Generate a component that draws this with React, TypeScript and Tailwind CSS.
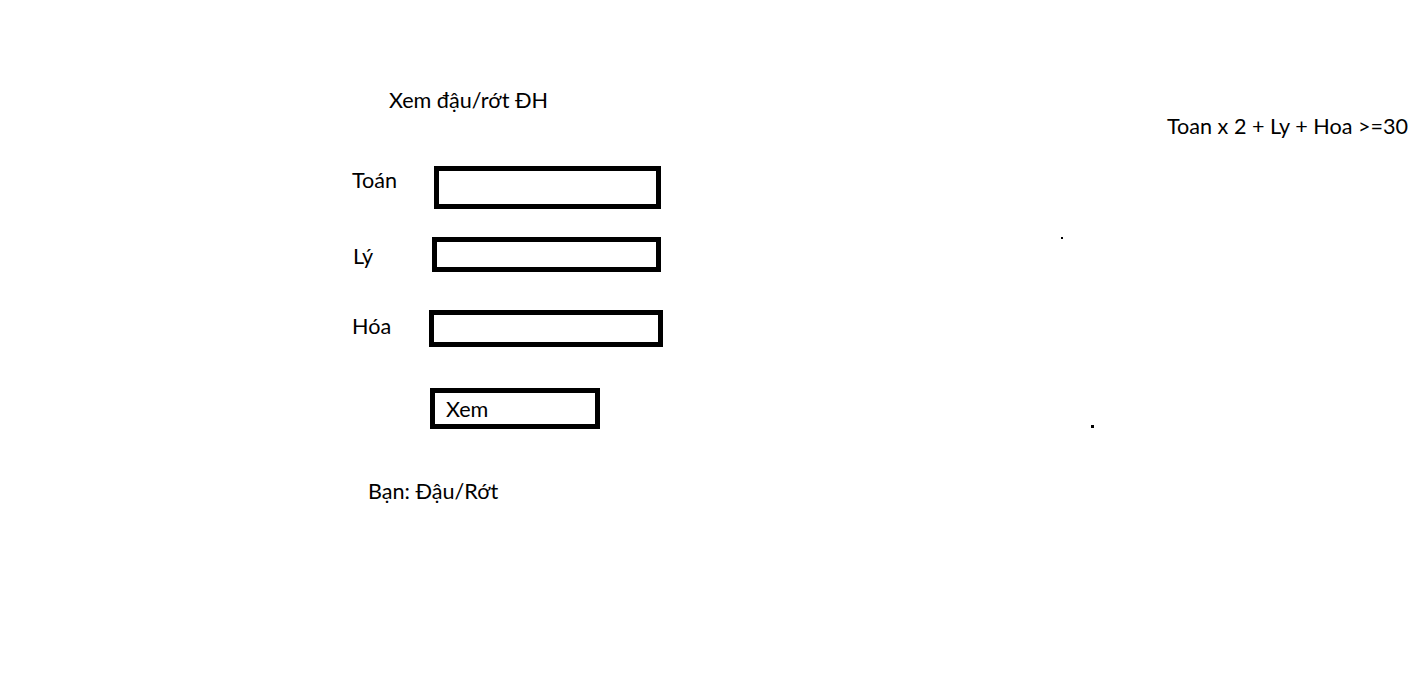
import React from "react";

const App = () => {
  return (
    <div className="relative flex h-[679px] w-full justify-between bg-white font-['Lato',sans-serif] text-[21.6px] text-black">
      <div className="flex flex-col pl-[340px] pt-[88px]">
        <h1 className="ml-[49px] leading-6">Xem đậu/rớt ĐH</h1>

        {/* form rows */}
        <div className="mt-[54px] flex items-start pl-[12px]">
          <span className="mt-[2px] w-[82px] leading-6">Toán</span>
          <div className="h-[43px] w-[227px] border-[5px] border-black" />
        </div>

        <div className="mt-[28px] flex items-start pl-[13px]">
          <span className="mt-[7px] w-[79px] leading-6">Lý</span>
          <div className="h-[35px] w-[229px] border-[5px] border-black" />
        </div>

        <div className="mt-[38px] flex items-start pl-[12px]">
          <span className="mt-[4px] w-[77px] leading-6">Hóa</span>
          <div className="h-[37px] w-[234px] border-[5px] border-black" />
        </div>

        <button className="ml-[90px] mt-[41px] flex h-[41px] w-[170px] items-center border-[5px] border-black pl-[11px] text-left leading-6">
          Xem
        </button>

        <p className="ml-[28px] mt-[50px] leading-6">Bạn: Đậu/Rớt</p>
      </div>

      <div className="pr-[12px] pt-[114px] leading-6">Toan x 2 + Ly + Hoa &gt;=30</div>

      <span className="absolute left-[1061px] top-[237px] h-[2px] w-[2px] bg-black" />
      <span className="absolute left-[1091px] top-[425px] h-[3px] w-[3px] bg-black" />
    </div>
  );
};

export default App;
